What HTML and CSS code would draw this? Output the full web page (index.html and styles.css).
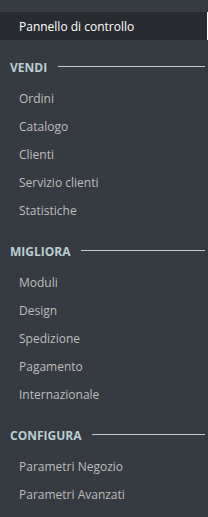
FILE: index.html
```html
<!DOCTYPE html>
<html lang="it">
<head>
    <meta charset="UTF-8">
    <meta name="viewport" content="width=device-width, initial-scale=1.0">
    <title>Menu</title>
    <link rel="stylesheet" href="styles.css">
</head>
<body>
    <nav class="nav-bar">
        <a class="nav-link active" href="#">Pannello di controllo</a>

        <div class="nav-title"><span>Vendi</span></div>
        <a class="nav-link" href="#">Ordini</a>
        <a class="nav-link" href="#">Catalogo</a>
        <a class="nav-link" href="#">Clienti</a>
        <a class="nav-link" href="#">Servizio clienti</a>
        <a class="nav-link" href="#">Statistiche</a>

        <div class="nav-title"><span>Migliora</span></div>
        <a class="nav-link" href="#">Moduli</a>
        <a class="nav-link" href="#">Design</a>
        <a class="nav-link" href="#">Spedizione</a>
        <a class="nav-link" href="#">Pagamento</a>
        <a class="nav-link" href="#">Internazionale</a>

        <div class="nav-title"><span>Configura</span></div>
        <a class="nav-link" href="#">Parametri Negozio</a>
        <a class="nav-link" href="#">Parametri Avanzati</a>
    </nav>
</body>
</html>
```

FILE: styles.css
```css
html, body {
    margin: 0;
    padding: 0;
    height: 100%;
}

body {
    background: #363a41;
    font-family: "Open Sans", "Liberation Sans", sans-serif;
    font-size: 12px;
}

.nav-bar {
    display: flex;
    flex-direction: column;
    padding-top: 12px;
}

.nav-link {
    display: block;
    height: 27px;
    line-height: 28px;
    padding: 1px 0 0 19px;
    color: #bebebe;
    text-decoration: none;
    white-space: nowrap;
    overflow: hidden;
}

.nav-link.active {
    background: #282b30;
    color: #fff;
    border-right: 1px solid #fff;
}

.nav-title {
    display: flex;
    align-items: center;
    gap: 11px;
    height: 16px;
    padding: 19px 3px 9px 10px;
    color: #bbcdd2;
    font-weight: 700;
    text-transform: uppercase;
}

.nav-title::after {
    content: "";
    flex: 1;
    height: 1px;
    margin-bottom: 2px;
    background: #bbcdd2;
}
```
